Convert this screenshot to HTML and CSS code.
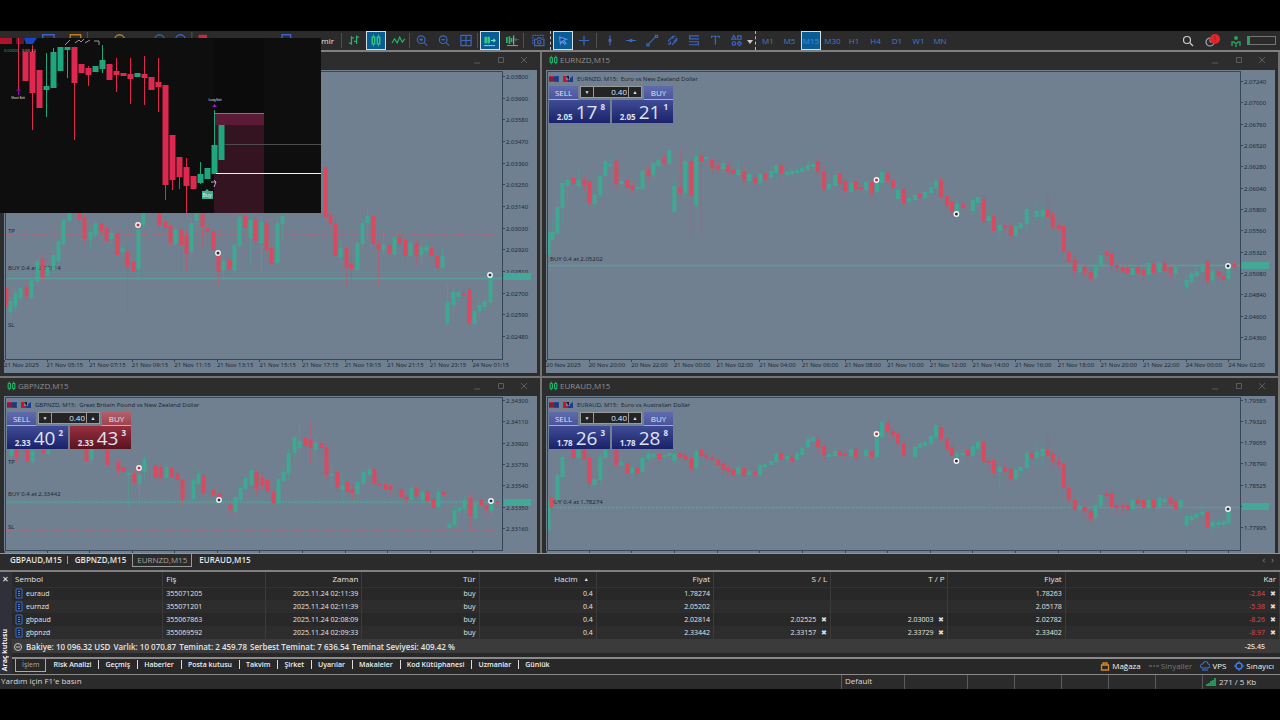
FILE: index.html
```html
<!DOCTYPE html>
<html lang="tr">
<head>
<meta charset="utf-8">
<title>EURNZD,M15</title>
<link rel="stylesheet" href="styles.css">
</head>
<body>
<svg class="defs" width="0" height="0" aria-hidden="true">
  <symbol id="candles" viewBox="0 0 12 12"><path d="M3 0v12M9 0v12" stroke="#19b36b"/><path d="M1.500 2.500h3v7h-3zM7.500 2.500h3v7h-3z" fill="#123d2a" stroke="#1fc978" stroke-width="1.300"/></symbol>
  <symbol id="flags" viewBox="0 0 26 8"><path d="M1 1h6v6H1z" fill="#c0203c"/><path d="M6 1h5v6H6z" fill="#22489c"/><path d="M1 3h9M1 5h9" stroke="#3a2340"/><path d="M15 1v6h5V5h-2V1z" fill="#c8142e"/><path d="M25 1v6h-5V5h2V3z" fill="#1b3c96"/><path d="M18 1h3v4z" fill="#1a1a2c"/></symbol>
  <symbol id="doc" viewBox="0 0 8 11"><path d="M1 1h6v9H1z" fill="#1b2338" stroke="#3f6bc4"/><path d="M3 3.500h2M3 5.500h2M3 7.500h2" stroke="#5b85dd"/></symbol>
</svg>
<main class="app">
  <header class="toolbar">
    <div class="tools tools-main">
      <svg class="peek" viewBox="0 0 340 20" aria-hidden="true"><g fill="none" stroke-width="1.500"><path d="M36 14V4h12v10zM288 14V4h9v10z" stroke="#3f62c8"/><path d="M65 14V4h11v10z" stroke="#c07a22"/><circle cx="117" cy="9" r="5" stroke="#b08a2a"/><circle cx="159" cy="9" r="5" stroke="#2f62b8"/><circle cx="181" cy="9" r="5" stroke="#3f62c8"/></g><path d="M200 4h9v8h-9z" fill="#c62b3c"/><path d="M83 1v18M193 1v18" stroke="#555"/></svg>
      <span class="order-label">Yeni Emir</span>
    </div>
    <i class="sep"></i>
    <div class="tools wide">
      <button aria-label="Bars"><svg viewBox="0 0 20 20"><path d="M7 5v10M4 13h3M7 7h3M13 4v10M10 11h3M13 6h3" stroke="#27b567" fill="none" stroke-width="1.500"/></svg></button>
      <button class="on" aria-label="Candles"><svg viewBox="0 0 20 20"><path d="M7 3v14M13 3v14" stroke="#2fd07c"/><path d="M5.500 6h3v8h-3zM11.500 6h3v8h-3z" fill="#0c5d86" stroke="#2fd07c" stroke-width="1.500"/></svg></button>
      <button aria-label="Line"><svg viewBox="0 0 20 20"><path d="M3 13l3-5 3 5 3-7 3 6 3-4" stroke="#27b567" fill="none" stroke-width="1.400"/></svg></button>
    </div>
    <i class="sep"></i>
    <div class="tools wide blue">
      <button aria-label="Zoom in"><svg viewBox="0 0 20 20"><circle cx="9" cy="9" r="4.500"/><path d="M12.500 12.500L16 16M7 9h4M9 7v4"/></svg></button>
      <button aria-label="Zoom out"><svg viewBox="0 0 20 20"><circle cx="9" cy="9" r="4.500"/><path d="M12.500 12.500L16 16M7 9h4"/></svg></button>
      <button aria-label="Tile"><svg viewBox="0 0 20 20"><path d="M4 4h12v12H4zM10 4v12M4 10h12"/></svg></button>
    </div>
    <i class="sep"></i>
    <div class="tools wide">
      <button class="on" aria-label="Auto scroll"><svg viewBox="0 0 20 20"><path d="M4 6h2v7H4zM7.500 6h2v7h-2z" fill="#2fd07c" stroke="#2fd07c"/><path d="M11 10h5M14 8l2 2-2 2" stroke="#7fe0c0" fill="none" stroke-width="1.300"/><path d="M3 16h13" stroke="#c8d8e0"/></svg></button>
      <button aria-label="Shift"><svg viewBox="0 0 20 20"><path d="M4 6v7M7 5v9M9.500 7v5" stroke="#27b567" stroke-width="2"/><path d="M12 4v11" stroke="#ccc"/><path d="M18 9h-5M15 7l-2 2 2 2" stroke="#3f6bc4" fill="none"/><path d="M4 16h13" stroke="#aaa"/></svg></button>
    </div>
    <i class="sep before-shot"></i>
    <div class="tools blue">
      <button aria-label="Screenshot"><svg viewBox="0 0 20 20"><path d="M4 14V4h12v3" stroke-dasharray="2 1"/><path d="M6 8.500h3l1-1.500h3l1 1.500h3V16H6z"/><circle cx="11.500" cy="12" r="2"/></svg></button>
    </div>
    <i class="dots"></i>
    <div class="tools blue">
      <button class="on" aria-label="Cursor"><svg viewBox="0 0 20 20"><path d="M6 6l8 2.500-3.500 1.500 3 3.500-1.500 1-3-3.500L7 14z"/></svg></button>
      <button aria-label="Crosshair"><svg viewBox="0 0 20 20"><path d="M10 4v12M4 10h12"/></svg></button>
    </div>
    <i class="sep loose"></i>
    <div class="tools blue">
      <button aria-label="Vertical line"><svg viewBox="0 0 20 20"><path d="M10 4v12M9 9h2v2H9z"/></svg></button>
      <button aria-label="Horizontal line"><svg viewBox="0 0 20 20"><path d="M4 10h12M9 9h2v2H9z"/></svg></button>
      <button aria-label="Trend line"><svg viewBox="0 0 20 20"><path d="M5.500 14.500l9-9M4 14h2.500v2.500H4zM14 4h2.500v2.500H14z"/></svg></button>
      <button aria-label="Channel"><svg viewBox="0 0 20 20"><path d="M4 11l6-6M9 15l6-6M4 14h3v-3M13 5h-3v3M11 12l4-5"/></svg></button>
      <button aria-label="Fibonacci"><svg viewBox="0 0 20 20"><path d="M4 4.500h12M4 8h12M4 11.500h12M4 15h12M5 4v4M15 11v4"/></svg></button>
      <button aria-label="Text"><svg viewBox="0 0 20 20"><path d="M6 7V5h9v2M10.500 5v10"/></svg></button>
      <button aria-label="Shapes"><svg viewBox="0 0 20 20"><path d="M5 8.500L7.500 4 10 8.500zM12 4.500h4v4h-4z"/><circle cx="7.500" cy="13.500" r="2"/><path d="M14 11l2.500 2.500L14 16l-2.500-2.500z"/></svg></button>
      <svg class="caret" viewBox="0 0 6 20"><path d="M0 9h6l-3 4z"/></svg>
    </div>
    <i class="dots"></i>
    <div class="frames">
      <button>M1</button><button>M5</button><button class="on">M15</button><button>M30</button><button>H1</button><button>H4</button><button>D1</button><button>W1</button><button>MN</button>
    </div>
    <div class="account">
      <svg width="12" height="12" viewBox="0 0 12 12"><circle cx="5" cy="5" r="3.500" fill="none" stroke="#ccc" stroke-width="1.200"/><path d="M8 8l3 3" stroke="#ccc" stroke-width="1.200"/></svg>
      <svg width="15" height="14" viewBox="0 0 15 14"><circle cx="5" cy="8" r="4" fill="none" stroke="#aaa" stroke-width="1.200"/><path d="M5 5v3h3" stroke="#aaa" fill="none"/><circle cx="10" cy="5" r="5" fill="#e2242e"/><path d="M10 2v4M10 7v1" stroke="#b01822"/></svg>
      <svg width="10" height="12" viewBox="0 0 10 12"><circle cx="5" cy="3" r="2" fill="#23a35c"/><path d="M1 11V7h2l2 2 2-2h2v4M4 11h2" fill="none" stroke="#23a35c" stroke-width="1.400"/></svg>
      <span class="meter"></span>
    </div>
  </header>

  <section class="windows">
    <article class="win">
      <div class="bar"><span></span><svg class="ctl" viewBox="0 0 54 10"><path d="M1 8h6M25.500 2.500h5v5h-5zM48 2l6 6M54 2l-6 6"/></svg></div>
      <div class="client">
        <div class="plot" data-chart="gbpaud">
          <span class="lv" data-y="231">TP</span><span class="lv" data-y="268">BUY 0.4 at 2.02814</span><span class="lv" data-y="325">SL</span>
        </div>
        <div class="prices p1"><span>2.03800</span><span>2.03690</span><span>2.03580</span><span>2.03470</span><span>2.03360</span><span>2.03250</span><span>2.03140</span><span>2.03030</span><span>2.02920</span><span>2.02810</span><span>2.02700</span><span>2.02590</span><span>2.02480</span><b class="tag"></b></div>
        <div class="times t12"><span>21 Nov 2025</span><span>21 Nov 05:15</span><span>21 Nov 07:15</span><span>21 Nov 09:15</span><span>21 Nov 11:15</span><span>21 Nov 13:15</span><span>21 Nov 15:15</span><span>21 Nov 17:15</span><span>21 Nov 19:15</span><span>21 Nov 21:15</span><span>21 Nov 23:15</span><span>24 Nov 01:15</span></div>
      </div>
    </article>

    <article class="win">
      <div class="bar"><svg class="mini"><use href="#candles"/></svg><span>EURNZD,M15</span><svg class="ctl" viewBox="0 0 54 10"><path d="M1 8h6M25.500 2.500h5v5h-5zM48 2l6 6M54 2l-6 6"/></svg></div>
      <div class="client">
        <div class="plot" data-chart="eurnzd">
          <span class="lv" data-y="259">BUY 0.4 at 2.05202</span>
          <div class="head"><svg class="flags"><use href="#flags"/></svg>EURNZD, M15:&nbsp; Euro vs New Zealand Dollar</div>
          <div class="trade">
            <div class="order"><button class="side">SELL</button><div class="lot"><button aria-label="Azalt">▼</button><input aria-label="Hacim" value="0.40"><button aria-label="Artır">▲</button></div><button class="side">BUY</button></div>
            <div class="quote"><small>2.05</small><strong>17</strong><sup>8</sup></div><div class="quote"><small>2.05</small><strong>21</strong><sup>1</sup></div>
          </div>
        </div>
        <div class="prices p2"><span>2.07240</span><span>2.07000</span><span>2.06760</span><span>2.06520</span><span>2.06280</span><span>2.06040</span><span>2.05800</span><span>2.05560</span><span>2.05320</span><span>2.05080</span><span>2.04840</span><span>2.04600</span><span>2.04360</span><b class="tag"></b></div>
        <div class="times t17"><span>20 Nov 2025</span><span>20 Nov 20:00</span><span>20 Nov 22:00</span><span>21 Nov 00:00</span><span>21 Nov 02:00</span><span>21 Nov 04:00</span><span>21 Nov 06:00</span><span>21 Nov 08:00</span><span>21 Nov 10:00</span><span>21 Nov 12:00</span><span>21 Nov 14:00</span><span>21 Nov 16:00</span><span>21 Nov 18:00</span><span>21 Nov 20:00</span><span>21 Nov 22:00</span><span>24 Nov 00:00</span><span>24 Nov 02:00</span></div>
      </div>
    </article>

    <article class="win low">
      <div class="bar"><svg class="mini"><use href="#candles"/></svg><span>GBPNZD,M15</span><svg class="ctl" viewBox="0 0 54 10"><path d="M1 8h6M25.500 2.500h5v5h-5zM48 2l6 6M54 2l-6 6"/></svg></div>
      <div class="client">
        <div class="plot" data-chart="gbpnzd">
          <span class="lv" data-y="462">TP</span><span class="lv" data-y="494">BUY 0.4 at 2.33442</span><span class="lv" data-y="527">SL</span>
          <div class="head"><svg class="flags"><use href="#flags"/></svg>GBPNZD, M15:&nbsp; Great Britain Pound vs New Zealand Dollar</div>
          <div class="trade">
            <div class="order"><button class="side">SELL</button><div class="lot"><button aria-label="Azalt">▼</button><input aria-label="Hacim" value="0.40"><button aria-label="Artır">▲</button></div><button class="side red">BUY</button></div>
            <div class="quote"><small>2.33</small><strong>40</strong><sup>2</sup></div><div class="quote red"><small>2.33</small><strong>43</strong><sup>3</sup></div>
          </div>
        </div>
        <div class="prices p3"><span>2.34300</span><span>2.34110</span><span>2.33920</span><span>2.33730</span><span>2.33540</span><span>2.33350</span><span>2.33160</span><b class="tag"></b></div>
        <div class="times t12"><span></span><span></span><span></span><span></span><span></span><span></span><span></span><span></span><span></span><span></span><span></span><span></span></div>
      </div>
    </article>

    <article class="win low">
      <div class="bar"><svg class="mini"><use href="#candles"/></svg><span>EURAUD,M15</span><svg class="ctl" viewBox="0 0 54 10"><path d="M1 8h6M25.500 2.500h5v5h-5zM48 2l6 6M54 2l-6 6"/></svg></div>
      <div class="client">
        <div class="plot" data-chart="euraud">
          <span class="lv" data-y="502">BUY 0.4 at 1.78274</span>
          <div class="head"><svg class="flags"><use href="#flags"/></svg>EURAUD, M15:&nbsp; Euro vs Australian Dollar</div>
          <div class="trade">
            <div class="order"><button class="side">SELL</button><div class="lot"><button aria-label="Azalt">▼</button><input aria-label="Hacim" value="0.40"><button aria-label="Artır">▲</button></div><button class="side">BUY</button></div>
            <div class="quote"><small>1.78</small><strong>26</strong><sup>3</sup></div><div class="quote"><small>1.78</small><strong>28</strong><sup>8</sup></div>
          </div>
        </div>
        <div class="prices p4"><span>1.79585</span><span>1.79320</span><span>1.79055</span><span>1.78790</span><span>1.78525</span><span>&nbsp;</span><span>1.77995</span><b class="tag"></b></div>
        <div class="times t17"><span></span><span></span><span></span><span></span><span></span><span></span><span></span><span></span><span></span><span></span><span></span><span></span><span></span><span></span><span></span><span></span><span></span></div>
      </div>
    </article>
  </section>

  <nav class="charttabs"><a href="#">GBPAUD,M15</a><a href="#">GBPNZD,M15</a><a href="#" class="active">EURNZD,M15</a><a href="#">EURAUD,M15</a><span class="arrows">‹ &nbsp; ›</span></nav>

  <section class="toolbox">
    <aside><button aria-label="Kapat">✕</button><span>Araç kutusu</span></aside>
    <div class="trades">
      <table>
        <colgroup><col class="c1"><col class="c2"><col class="c3"><col class="c4"><col class="c4"><col class="c4"><col class="c4"><col class="c4"><col class="c4"><col></colgroup>
        <thead><tr><th class="l">Sembol</th><th class="l">Fiş</th><th>Zaman</th><th>Tür</th><th>Hacim<i>▲</i></th><th>Fiyat</th><th>S / L</th><th>T / P</th><th>Fiyat</th><th>Kar</th></tr></thead>
        <tbody>
          <tr><td class="l"><svg class="doc"><use href="#doc"/></svg>euraud</td><td class="l">355071205</td><td>2025.11.24 02:11:39</td><td>buy</td><td>0.4</td><td>1.78274</td><td></td><td></td><td>1.78263</td><td class="loss">-2.84<i>✖</i></td></tr>
          <tr><td class="l"><svg class="doc"><use href="#doc"/></svg>eurnzd</td><td class="l">355071201</td><td>2025.11.24 02:11:39</td><td>buy</td><td>0.4</td><td>2.05202</td><td></td><td></td><td>2.05178</td><td class="loss">-5.38<i>✖</i></td></tr>
          <tr><td class="l"><svg class="doc"><use href="#doc"/></svg>gbpaud</td><td class="l">355067863</td><td>2025.11.24 02:08:09</td><td>buy</td><td>0.4</td><td>2.02814</td><td>2.02525<i>✖</i></td><td>2.03003<i>✖</i></td><td>2.02782</td><td class="loss">-8.26<i>✖</i></td></tr>
          <tr><td class="l"><svg class="doc"><use href="#doc"/></svg>gbpnzd</td><td class="l">355069592</td><td>2025.11.24 02:09:33</td><td>buy</td><td>0.4</td><td>2.33442</td><td>2.33157<i>✖</i></td><td>2.33729<i>✖</i></td><td>2.33402</td><td class="loss">-8.97<i>✖</i></td></tr>
        </tbody>
      </table>
      <div class="balance"><svg width="8" height="8" viewBox="0 0 8 8"><circle cx="4" cy="4" r="3.500" fill="none" stroke="#ccc"/><path d="M2 4h4" stroke="#ccc"/></svg><span class="sums"><span>Bakiye: 10 096.32 USD</span><span>Varlık: 10 070.87</span><span>Teminat: 2 459.78</span><span>Serbest Teminat: 7 636.54</span><span>Teminat Seviyesi: 409.42 %</span></span><span class="total">-25.45</span></div>
      <nav class="boxtabs">
        <a href="#" class="active">İşlem</a><a href="#">Risk Analizi</a><a href="#">Geçmiş</a><a href="#">Haberler</a><a href="#">Posta kutusu</a><a href="#">Takvim</a><a href="#">Şirket</a><a href="#">Uyarılar</a><a href="#">Makaleler</a><a href="#">Kod Kütüphanesi</a><a href="#">Uzmanlar</a><a href="#">Günlük</a>
        <div class="services">
          <a href="#"><svg width="10" height="10" viewBox="0 0 10 10"><path d="M1.500 4h7v5h-7zM3 4V2h4v2" fill="none" stroke="#d08a28" stroke-width="1.300"/></svg>Mağaza</a>
          <a href="#" class="dim"><svg width="10" height="10" viewBox="0 0 10 10"><path d="M0 5h3M4 5h2M7 5h3" stroke="#777"/></svg>Sinyaller</a>
          <a href="#"><svg width="10" height="10" viewBox="0 0 10 10"><path d="M2 7a2 2 0 0 1 1-4 2.500 2.500 0 0 1 5 0 2 2 0 0 1 0 4zM2 9h6" fill="none" stroke="#3f7be0"/></svg>VPS</a>
          <a href="#"><svg width="10" height="10" viewBox="0 0 10 10"><circle cx="5" cy="5" r="3" fill="none" stroke="#3f7be0" stroke-width="1.500"/><path d="M5 0v2M5 8v2M0 5h2M8 5h2" stroke="#3f7be0"/></svg>Sınayıcı</a>
        </div>
      </nav>
    </div>
  </section>

  <footer class="status"><span class="help">Yardım için F1'e basın</span><span class="s1">Default</span><span class="s1"></span><span class="s2"></span><span class="s2"></span><span class="s2"></span><span class="s2"></span><span class="s2"></span><span class="net"><svg width="10" height="8" viewBox="0 0 10 8"><path d="M1 8V6M3 8V5M5 8V3M7 8V2M9 8V0" stroke="#25b765" stroke-width="1.500"/></svg>271 / 5 Kb</span></footer>

  <figure class="pip" aria-label="Chart preview">
    <svg id="pip" viewBox="0 38 321 175" preserveAspectRatio="none">
      <path d="M214 38h50v76h-50z" fill="#0b0b0b"/>
      <path d="M214 113h50v13h-50z" fill="#5b1b36"/><path d="M214 125h50v88h-50z" fill="#341421"/>
      <path d="M214 113.500h50" stroke="#88737c"/><path d="M225 144.500h96" stroke="#4c4c4c"/>
      <path d="M0 38h12v6H0z" fill="#b3122c"/><path d="M16 38h8v6h-8z" fill="#6b1226"/><path d="M24 38h13l-4 6h-7z" fill="#1a45c0"/>
      <path d="M65 45l5-5M75 43l4-3 2 2 3-3M85 43l5-3M94 41h5v4" stroke="#999" fill="none"/>
      <path d="M18.500 38v52" stroke="#de2a50"/><path d="M18.500 90v5M16.500 91l2-2 2 2" stroke="#8b12b0" fill="none"/>
      <g id="pip-candles"></g>
      <path d="M216 173.500h105" stroke="#f2f2f2"/>
      <path d="M212 107h5l-2.500-3z" fill="#9b14b8"/><path d="M211 182h5l-2-2M216 182l-2 5" stroke="#b9a6c4" fill="none"/>
      <path d="M202 191h3l2-2 2 2h4v8h-11z" fill="#43ab93"/>
      <text x="207" y="197" text-anchor="middle" class="pip-buy">Buy</text>
      <text x="18" y="99" text-anchor="middle" class="pip-note">Short Exit</text>
      <text x="215" y="101" text-anchor="middle" class="pip-note">Long Exit</text>
      <text x="4" y="52" class="pip-vals">0.00000</text><text x="22" y="52" class="pip-vals light">0.00 ##</text>
    </svg>
  </figure>
</main>
<script src="script.js"></script>
</body>
</html>
```
FILE: styles.css
```css
* { box-sizing: border-box; }
body { margin: 0; background: #000; color: #e4e4e4; font: 7px/10px "Open Sans", "Noto Sans", sans-serif; }
button, input { font: inherit; color: inherit; background: none; border: 0; padding: 0; margin: 0; }
a { color: inherit; text-decoration: none; }
.defs { position: absolute; }
.app { position: relative; display: flex; flex-direction: column; height: 100vh; min-height: 560px; padding: 31px 0; overflow: hidden; }

.toolbar { display: flex; align-items: center; height: 21px; background: #2b2b2b; border-bottom: 2px solid #808080; }
.tools { display: flex; align-items: center; gap: 1px; }
.tools.wide { gap: 2px; }
.tools-main { position: relative; width: 340px; height: 19px; justify-content: flex-end; }
.peek { position: absolute; inset: 0; width: 340px; height: 19px; }
.order-label { padding-right: 6px; font-size: 8px; }
.toolbar button { width: 20px; height: 19px; }
.toolbar button svg { display: block; width: 20px; height: 17px; margin: auto; }
.toolbar button.on { background: #0a5c94; border: 1px solid #cfdde6; }
.toolbar button.on svg { width: 18px; }
.blue svg { fill: none; stroke: #3c67c0; stroke-width: 1.4; }
.blue .on svg { stroke: #5c93e6; fill: #0c3e78; }
.sep { width: 1px; height: 15px; margin: 0 2px 0 1px; background: #505050; flex: none; }
.before-shot { margin: 0 4px 0 1px; }
.loose { margin: 0 3px 0 2px; }
.dots { height: 19px; margin: 0 2px; border-left: 1px dashed #bbb; }
.caret { width: 6px; height: 20px; }
.blue .caret { fill: #ccc; stroke: none; }
.frames { display: flex; justify-content: space-between; width: 192px; color: #4379d8; font-size: 8px; }
.frames button.on { color: #3f8ae6; }
.account { display: flex; align-items: center; gap: 6px; margin-left: auto; padding-right: 4px; }
.account svg + svg { margin-left: 5px; }
.meter { width: 29px; height: 9px; border: 1px solid #747474; border-left: 3px solid #23a35c; }

.windows { flex: 1; min-height: 0; display: grid; grid-template-columns: 540fr 736fr; grid-template-rows: 324fr 175fr; gap: 2px; padding-right: 2px; background: #747474; border-bottom: 1px solid #8c969e; }
.win { display: flex; flex-direction: column; min-width: 0; min-height: 0; padding: 0 3px 3px 4px; background: #2d2d2d; overflow: hidden; }
.win.low { padding-bottom: 0; }
.bar { display: flex; align-items: center; height: 18px; flex: none; padding: 0 10px 2px 3px; color: #8f8f8f; font-size: 8px; }
.mini { width: 9px; height: 12px; margin-right: 2px; }
.ctl { width: 54px; height: 10px; margin-left: auto; fill: none; stroke: #5c5c5c; }
.client { flex: 1; min-height: 0; display: grid; grid-template-columns: 1fr 34px; grid-template-rows: minmax(0, 1fr) 13px; padding: 1px 0 0 1px; background: #708090; color: #1d2a3a; font: 6px/8px "Noto Sans", sans-serif; }
.low .client { grid-template-rows: minmax(0, 1fr) 2px; }
.plot { position: relative; border: 1px solid #34475a; min-width: 0; }
.plot > svg.candles { position: absolute; inset: 0; width: 100%; height: 100%; }
.lv { position: absolute; left: 2px; transform: translateY(-50%); white-space: nowrap; }
.head { position: absolute; left: 0; top: 3px; display: flex; align-items: center; gap: 3px; z-index: 2; white-space: nowrap; }
.flags { width: 26px; height: 8px; }
.prices { position: relative; display: flex; flex-direction: column; justify-content: space-between; }
.prices span::before { content: ""; display: inline-block; width: 2px; height: 1px; margin-right: 1px; vertical-align: 2px; background: #34475a; }
.p1 { padding: 2px 0 19px; }
.p2 { padding: 7px 0 18px; }
.p3 { padding: 0 0 18px; }
.p4 { padding: 0 0 19px; }
.tag { position: absolute; left: 1px; width: 27px; height: 7px; margin-top: -3px; background: #43a898; }
.p1 .tag { top: 71%; }
.p2 .tag { top: 67%; }
.p3 .tag { top: 68%; }
.p4 .tag { top: 71%; }
.times { grid-column: 1 / -1; display: grid; grid-auto-flow: column; grid-auto-columns: 1fr; margin-left: -1px; }
.times span { position: relative; white-space: nowrap; width: 0; padding-top: 1px; }
.times span::before { content: ""; position: absolute; left: 0; top: 0; width: 1px; height: 2px; background: #34475a; }
.t12 { padding-right: 22px; }
.t17 { padding-right: 4px; }

.trade { position: absolute; z-index: 2; left: 1px; top: 14px; width: 124px; display: grid; grid-template-columns: 1fr 1fr; gap: 0 2px; color: #dfe2f2; font-family: "Open Sans", sans-serif; }
.order { grid-column: 1 / -1; display: grid; grid-template-columns: 29px 1fr 29px; gap: 2px; }
.side { height: 14px; font-size: 8px; background: linear-gradient(#5f6bad, #4a5699); border-bottom: 1px solid #a3abd8; }
.side.red { background: linear-gradient(#b2606a, #9d4450); border-color: #dba2a8; }
.lot { display: grid; grid-template-columns: 12px 1fr 12px; height: 12px; background: #242424; border: 1px solid #9a9a9a; font-size: 5px; }
.lot input { width: 100%; min-width: 0; padding-right: 1px; text-align: right; font-size: 8px; line-height: 10px; border: solid #9a9a9a; border-width: 0 1px; }
.quote { display: flex; align-items: flex-end; justify-content: flex-end; gap: 3px; height: 23px; padding: 0 5px 2px 0; background: linear-gradient(#3f4c95, #19226a); }
.quote.red { background: linear-gradient(#97303f, #5c1220); }
.quote small { font-size: 8px; font-weight: 700; line-height: 8px; }
.quote strong { font-size: 19px; font-weight: 400; line-height: 18px; }
.quote sup { padding-top: 2px; font-size: 8px; font-weight: 700; line-height: 9px; align-self: flex-start; }

.charttabs { display: flex; height: 18px; padding-left: 3px; background: #2b2b2b; border-bottom: 2px solid #808080; font-size: 8px; font-weight: 600; line-height: 12px; }
.charttabs a { height: 13px; padding: 0 6px 0 7px; position: relative; }
.charttabs a:first-child::after { content: ""; position: absolute; right: 0; top: 2px; width: 1px; height: 8px; background: #999; }
.charttabs .active { color: #a5a5a5; font-weight: 400; border: 1px solid #999; border-top: 0; padding: 0 4px; }
.arrows { margin-left: auto; padding-right: 6px; color: #777; }

.toolbox { display: grid; grid-template-columns: 12px 1fr; background: #282828; border-bottom: 1px solid #8a8a8a; }
.toolbox aside { display: flex; flex-direction: column; justify-content: space-between; align-items: center; padding: 2px 2px 3px 0; background: #30303a; color: #f2f2f2; }
.toolbox aside button { font-size: 8px; }
.toolbox aside span { writing-mode: vertical-rl; transform: rotate(180deg); font-weight: 700; }
table { width: 100%; border-collapse: collapse; table-layout: fixed; }
.c1 { width: 11.9%; }
.c2 { width: 8.1%; }
.c3 { width: 7.6%; }
.c4 { width: 9.25%; }
th, td { height: 13px; padding: 0 3px; border-right: 1px solid #3b3b3b; text-align: right; font-weight: 400; white-space: nowrap; line-height: 12px; }
th { height: 15px; font-size: 8px; border-bottom: 1px solid #333; }
tbody tr:nth-child(even) { background: #2d2d2d; }
.l { text-align: left; }
td i, th i { display: inline-block; width: 8px; margin-left: 3px; font-style: normal; font-size: 7px; text-align: right; }
th i { width: 9px; font-size: 5px; text-align: left; vertical-align: 1px; margin-left: 6px; }
td i { color: #ddd; }
.doc { width: 8px; height: 11px; margin-right: 3px; vertical-align: middle; }
.loss { color: #dc4a56; }
.balance { display: flex; align-items: center; gap: 4px; height: 14px; padding: 1px 15px 0 2px; margin-bottom: 4px; background: #3b3b3b; font-size: 8px; font-weight: 600; }
.sums { display: flex; gap: 3px; }
.total { margin-left: auto; font-size: 7px; }
.boxtabs { display: flex; height: 17px; padding-left: 3px; border-top: 2px solid #8a8a8a; font-weight: 600; line-height: 11px; color: #f0f0f0; }
.boxtabs > a { position: relative; padding: 0 7px; height: 13px; }
.boxtabs > a + a:not(:nth-child(2))::before { content: ""; position: absolute; left: 0; top: 1px; width: 1px; height: 9px; background: #ddd; }
.boxtabs .active { color: #aaa; font-weight: 400; border: 1px solid #aaa; border-top: 0; padding: 0 6px; }
.services { display: flex; gap: 8px; margin-left: auto; padding: 1px 6px 0 0; font-weight: 400; font-size: 8px; }
.services a { display: flex; align-items: center; gap: 2px; height: 11px; }
.services .dim { color: #777; }

.status { display: flex; height: 14px; background: #2b2b2b; font-size: 8px; line-height: 12px; color: #dadada; }
.status span { border-right: 1px solid #5b5b5b; padding-left: 3px; }
.status .help { flex: 1; padding-left: 1px; }
.status .s1 { width: 63px; }
.status .s2 { width: 47px; }
.status .net { width: 77px; border: 0; display: flex; align-items: center; gap: 3px; }

.pip { position: absolute; z-index: 5; left: 0; top: 38px; width: 321px; height: 175px; margin: 0; background: #0e0e0e; }
.pip svg { display: block; width: 100%; height: 100%; }
.pip text { font-family: "Noto Sans", sans-serif; fill: #eee; }
.pip .pip-buy { font-size: 5px; }
.pip .pip-note { font-size: 3px; }
.pip .pip-vals { font-size: 4px; fill: #2d9ba8; }
.pip .pip-vals.light { fill: #d8a8b2; }
```
FILE: script.js
```js
// Candle notation: colour + x, top, bottom [, high, low]
const charts = {
  gbpaud: {
    box: [6, 72, 496, 287],
    lines: [[234, 'r', '7 3 2 3'], [329, 'r', ''], [272, 'f', ''], [278, 'g', '']],
    marks: [[138, 225, 'r'], [218, 253, 'k'], [490, 275, 'k']],
    data: 'r6,288,307 g10,301,312 g15,293,307 g20,288,298 r26,287,296 g31,280,298 g37,261,282 r42,259,277 g47,267,276 g53,255,270 g58,241,261 g63,220,244 g69,213,221 r79,213,219 r84,217,239 g90,232,240,228,250 g95,223,235 r101,223,231 r106,228,241 g111,233,239 r117,233,255 g122,248,252 r127,252,267,245,313 r133,262,271 g138,229,269,228,280 g143,213,225 r159,213,226 r165,222,228 r170,226,243 g175,230,244 r181,229,245,225,272 r186,236,254,230,271 g191,223,252 g196,213,221 r202,213,227,213,248 r207,228,232 r213,231,250 r218,255,272,250,286 g223,261,270,255,280 r229,260,270 g234,245,270 g239,217,246 r245,216,228 g250,220,238,214,264 r255,219,241 g261,222,243,216,273 r266,223,250 r271,248,264 g277,223,263 g282,216,224,213,240 r325,167,217,161,218 r330,215,224 r335,223,256 g340,248,257,240,262 r346,248,268,245,286 r351,263,269,250,286 g357,243,270 g362,223,244 g367,216,223,207,240 r373,216,244 r378,244,249,240,286 g383,245,250,232,256 r389,245,253 g394,238,254 r399,237,244 r405,240,256,238,268 g410,243,256 r416,243,256,240,265 g421,247,255,238,267 g426,246,251,240,256 r431,248,256 r437,256,268 g442,256,268,247,269 g447,302,323,285,326 g453,292,305,286,321 g458,292,297 r463,293,296 r469,289,323,287,326 g474,311,324 g479,305,311 g484,301,307 g490,275,302'
  },
  eurnzd: {
    box: [548, 72, 693, 287],
    lines: [[265, 'g', '']],
    marks: [[877, 180, 'r'], [957, 214, 'k'], [1229, 266, 'k']],
    data: 'g548,232,255 g552,232,240,220,240 g557,207,234 g562,183,208,180,225 g567,180,186,176,205 r573,178,184 g578,180,186,170,194 r584,180,185 r589,181,203 g594,195,204 g600,176,195 g605,161,176 g610,164,166,156,168 r616,161,184 g621,181,184 r627,180,188 r632,186,190 g637,187,189 g642,171,189 r648,170,176 g653,163,175 g658,160,166 r664,158,163 g669,150,164 g674,186,212,178,213 r680,187,193,150,196 g685,161,193 r691,161,196,158,238 g696,156,205,148,210 r701,155,161,153,233 g706,157,159 r712,160,168 r718,166,169 g723,163,169 r728,165,172 r733,170,174 g738,170,175,160,176 r744,171,180 g749,174,181 r755,177,183 g760,174,183 r765,174,179 g771,171,178 g776,165,173 r781,165,173 g787,172,175 g792,171,174 g797,170,173 g802,168,172 g808,165,170,158,172 g813,164,167 r818,161,172 r824,171,189 g829,184,189 g835,175,186 r840,174,184 r845,181,191 g851,183,192 r856,182,189 r861,187,190 g866,182,190 r872,182,193 g877,183,192 g882,172,183 r888,173,181 r893,180,187 g898,190,199,178,200 r904,189,203 g909,198,202 g915,195,200 r920,194,198 g925,192,198 g931,187,193 g936,181,188,177,190 r941,180,197 r947,196,206 r952,202,212 g957,204,213 r963,204,208 g973,200,211 g978,197,203 r984,199,222 g989,216,221 r994,216,231 g1000,225,231,222,240 r1005,225,228 r1011,226,236 g1016,226,236 g1021,223,228 g1027,209,224,207,232 g1037,211,217,201,221 g1043,210,217,204,228 r1048,209,217,193,218 r1053,213,227 r1059,225,229 r1064,226,252 r1069,252,262 r1075,260,271 g1080,267,272 r1085,267,273 r1091,272,279 g1096,265,278 g1101,255,266 r1107,252,256 r1112,254,266 r1117,265,268 r1123,268,271 r1128,268,273 g1133,268,275 r1138,267,273 r1144,270,275 g1149,263,275 r1154,264,273 g1160,263,272 r1165,263,271 r1171,267,273 g1176,267,274 g1187,280,287 g1192,273,282 g1197,271,276 g1203,264,272 r1208,261,281 g1213,271,280 r1219,271,276 r1224,276,280 g1229,268,279 r1235,264,267'
  },
  gbpnzd: {
    box: [6, 398, 496, 152],
    lines: [[465, 'r', '8 8'], [530, 'r', '8 8'], [500, 'f', ''], [502, 'g', '2 1']],
    marks: [[139, 468, 'r'], [219, 500, 'k'], [491, 501, 'k']],
    data: 'g11,448,456 r16,450,457 r27,450,462 g32,450,462 r43,450,454 g48,450,454 r86,448,461 g91,448,460 r107,448,465 r118,462,471 r123,467,472 g128,473,475,472,507 r134,474,483 g139,475,484,470,504 g144,459,472,454,482 r155,465,477 r160,467,478 g166,467,478 r171,468,477 r177,473,480 r182,480,500 g193,480,499,478,502 g198,474,484 r203,475,493 r213,490,495 r219,493,500 r230,505,510 g235,497,512,496,518 g240,488,500 g245,478,489 g251,470,485 r256,472,489 r262,478,485 r267,480,492 r273,492,503 g278,479,503 g283,472,481 g288,453,474 g294,437,453 g299,441,448,424,454 r305,438,446,436,462 r310,440,448,421,464 g315,443,450,436,462 r321,443,448 r326,447,475 g331,473,476,464,486 r337,472,488 g342,485,490,475,502 r347,482,492 r352,489,493 g357,482,494 g363,472,484 g369,469,475 r374,469,484 r379,483,486 r385,484,489 r390,486,490 r401,489,497 r406,497,500 g411,488,500 r416,488,496 g422,492,500 r427,491,501 r433,499,508 g438,492,507 r443,492,495 g449,524,528 g454,510,525,505,528 g459,508,511 g464,500,509 r470,498,516,494,529 g475,503,518 r481,500,505 r486,505,510 g491,503,511 r497,501,503'
  },
  euraud: {
    box: [548, 398, 693, 152],
    lines: [[507, 'g', '3 1']],
    marks: [[877, 434, 'r'], [957, 461, 'k'], [1229, 509, 'k']],
    data: 'g548,500,530 r551,498,508 g557,475,500 g562,457,477 r573,450,458 g578,450,458 r584,450,459 r589,458,484 g594,479,485 g600,457,480 g605,450,458 r616,450,465 g621,462,465 r627,463,473 g632,468,473 r637,468,474 g642,458,472 g648,454,459 g653,454,457 r659,454,459 g664,455,457 g669,453,456 g674,454,461 r680,453,457 r685,455,460 r691,458,469 g696,451,468 r701,450,456 r706,455,458 r712,457,460 r718,460,465 r723,463,470 r728,468,472 r733,470,475 g738,467,474 r744,468,476 g749,471,475 r755,472,475 g760,465,475 g765,464,467 g771,461,465 g776,454,462 r781,453,460 g787,456,459 r792,457,461 g797,453,460 g802,448,455 g808,439,447,434,449 g813,437,441 r818,439,447 r824,446,456 g829,454,457 g835,451,456 r840,451,455 r845,453,456 g851,449,456 r856,449,457 g866,450,456 r872,451,457 g877,437,457 g882,422,437 r888,423,431 r893,431,435 r898,434,444 r904,443,456 g915,447,457 g920,444,448 g925,442,446 g931,436,444 g936,425,437 r941,427,440 r947,439,449 r952,447,456 g957,453,457 g963,453,455 r968,450,456 g973,446,456 g978,442,449 r984,442,462 r989,461,463 r994,460,473 g1000,467,472,466,488 r1005,467,472 r1011,469,479 g1016,470,479 g1021,467,471 g1027,453,468 r1032,453,458 g1037,452,458,444,466 g1043,449,456,444,468 r1048,450,456,433,457 r1053,453,462 r1059,461,465 r1064,464,488 r1069,488,500 r1075,500,510 g1080,506,510 r1085,507,512 r1091,511,519 g1096,505,518 g1101,495,506 r1107,493,496 r1112,494,507 r1117,505,508 r1123,505,508 r1128,505,510 g1133,500,509 r1138,500,504 r1144,500,508 g1149,500,508 r1154,500,508 g1160,498,508 g1165,499,502 r1171,498,503 r1176,502,509 g1181,500,507 g1187,516,525 g1192,516,520 g1197,514,518 g1203,512,515 r1208,512,527 g1213,522,527 g1219,522,525 g1224,521,525 g1229,510,523'
  }
};
const pip = 'r25,52,81 r32,52,93,45,130 r39,70,108 g46,86,90,53,117 g53,52,88,48,88 g60,47,71 g67,47,50,47,78 r74,47,83,47,140 r81,64,73 r88,68,75,66,86 g95,66,72 g102,60,69,45,73 r109,64,80 r116,71,75,58,92 r123,73,76 r130,74,79,58,104 g137,73,77 r144,74,78,56,105 r151,77,90 r158,82,87,58,112 r165,85,185,85,200 r172,135,180,135,190 r179,157,177,157,189 r186,167,186,158,213 r193,176,189 g200,174,183,162,184 g207,168,179 g214,145,174,110,174 g221,125,160';

function candles(data, width, colours, spread) {
  return data.split(' ').map((item, i) => {
    const [x, top, bottom, high, low] = item.slice(1).split(',').map(Number);
    const colour = colours[item[0]];
    const up = high ?? top - spread * (1 + i * 7 % 5);
    const down = low ?? bottom + spread * (1 + i * 5 % 6);
    return `<path d="M${x + .5} ${up}V${down}" stroke="${colour}" stroke-opacity="${spread ? .5 : 1}"/>` +
      `<path d="M${x + .5} ${top}V${bottom}" stroke="${colour}" stroke-width="${width}"/>`;
  }).join('');
}

const lineColours = { r: '#b0647a', g: '#5aa39c', f: '#638c94' };
for (const plot of document.querySelectorAll('.plot')) {
  const { box, lines, marks, data } = charts[plot.dataset.chart];
  const levels = lines.map(([y, c, dash]) => `<path d="M${box[0]} ${y + .5}H${box[0] + box[2] - (c === 'r' ? 8 : 0)}" stroke="${lineColours[c]}" stroke-width="${c === 'g' ? 1.5 : 1}" stroke-opacity=".8" stroke-dasharray="${dash}"/>`).join('');
  const dots = marks.map(([x, y, c]) => `<circle cx="${x}" cy="${y}" r="2.200" fill="${c === 'r' ? '#c22c3c' : '#1c3440'}" stroke="#f4f4f4" stroke-width="1.400"/>`).join('');
  plot.insertAdjacentHTML('beforeend', `<svg class="candles" viewBox="${box.join(' ')}" preserveAspectRatio="none" fill="none">${levels}${candles(data, 4, { r: '#d64b60', g: '#3fa893' }, 1)}${dots}</svg>`);
  for (const label of plot.querySelectorAll('.lv')) {
    label.style.top = (label.dataset.y - box[1]) / box[3] * 100 + '%';
  }
}
document.getElementById('pip-candles').innerHTML = candles(pip, 6, { r: '#df2850', g: '#1fa67c' }, 0);
```
